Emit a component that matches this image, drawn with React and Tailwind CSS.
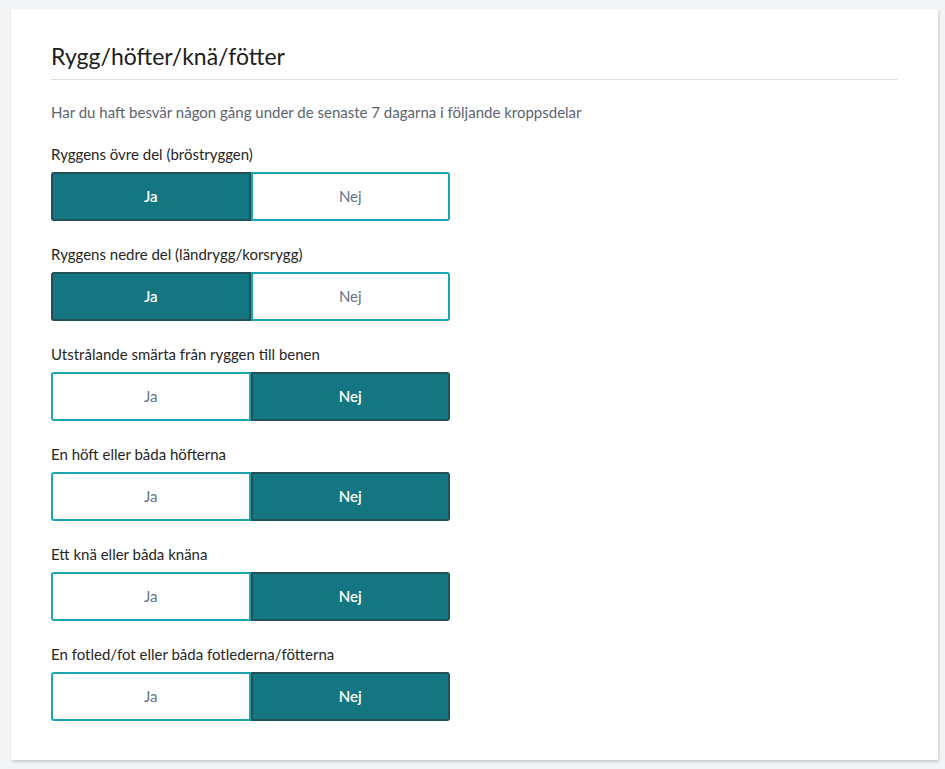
import React, { useState } from "react";

const questions = [
  { label: "Ryggens övre del (bröstryggen)", value: "ja" },
  { label: "Ryggens nedre del (ländrygg/korsrygg)", value: "ja" },
  { label: "Utstrålande smärta från ryggen till benen", value: "nej" },
  { label: "En höft eller båda höfterna", value: "nej" },
  { label: "Ett knä eller båda knäna", value: "nej" },
  { label: "En fotled/fot eller båda fotlederna/fötterna", value: "nej" },
];

function Choice({ active, onClick, children, side }) {
  const base =
    "flex-1 h-full flex items-center justify-center text-[15px] border-2 " +
    (side === "left" ? "rounded-l-[3px] " : "rounded-r-[3px] ");
  return (
    <button
      type="button"
      onClick={onClick}
      className={
        base +
        (active
          ? "bg-[#137680] border-[#1f5157] text-white font-semibold"
          : "bg-white border-[#1aa5b5] text-[#667389]")
      }
    >
      {children}
    </button>
  );
}

function Question({ label, initial }) {
  const [val, setVal] = useState(initial);
  return (
    <div className="flex flex-col">
      <div className="text-[15px] leading-[20px] text-[#262626] mb-[8px]">{label}</div>
      <div className="flex w-[399px] h-[49px]">
        <Choice side="left" active={val === "ja"} onClick={() => setVal("ja")}>
          Ja
        </Choice>
        <Choice side="right" active={val === "nej"} onClick={() => setVal("nej")}>
          Nej
        </Choice>
      </div>
    </div>
  );
}

export default function App() {
  return (
    <div
      className="min-h-[769px] bg-[#f3f4f6] pt-[9px] pl-[11px] pr-[7px] pb-[9px]"
      style={{ fontFamily: "Lato, 'Noto Sans', sans-serif" }}
    >
      <div className="bg-white shadow-[1px_2px_3px_rgba(0,0,0,0.18)] px-[40px] pt-[31px] pb-[39px]">
        <h1 className="text-[23px] leading-[32px] text-[#1c1c1c] pb-[7px] border-b border-[#dcdfe3]">
          Rygg/höfter/knä/fötter
        </h1>
        <p className="mt-[22px] text-[15px] leading-[20px] text-[#5c6470]">
          Har du haft besvär någon gång under de senaste 7 dagarna i följande kroppsdelar
        </p>
        <div className="mt-[22px] flex flex-col gap-[23px]">
          {questions.map((q) => (
            <Question key={q.label} label={q.label} initial={q.value} />
          ))}
        </div>
      </div>
    </div>
  );
}
